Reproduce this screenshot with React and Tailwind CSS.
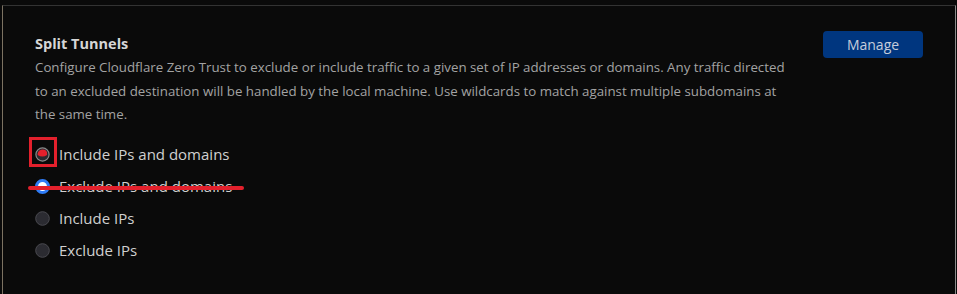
export default function App() {
  const options = [
    { label: 'Include IPs and domains', state: 'marked' },
    { label: 'Exclude IPs and domains', state: 'checked' },
    { label: 'Include IPs', state: 'off' },
    { label: 'Exclude IPs', state: 'off' },
  ];

  return (
    <div
      className="w-[957px] h-[294px] bg-[#0a0a0a] pl-[2px] pt-[5px] pr-[1px] overflow-hidden"
      style={{ fontFamily: '"Open Sans", "Noto Sans", sans-serif' }}
    >
      <div className="h-full border-l border-t border-r border-l-[#7c7262] border-t-[#333333] border-r-[#8a8a8a]">
        <div className="flex justify-between pl-[32px] pr-[32px] pt-[27px]">
          <div className="w-[752px]">
            <h2 className="text-[14.5px] font-bold text-[#d6d6d6] leading-[22px]">Split Tunnels</h2>
            <p className="text-[13.3px] leading-[23.5px] text-[#a3a3a3] mt-[1px]">
              Configure Cloudflare Zero Trust to exclude or include traffic to a given set of IP addresses or domains. Any traffic directed to an excluded destination will be handled by the local machine. Use wildcards to match against multiple subdomains at the same time.
            </p>
          </div>
          <button className="mt-[-2px] w-[100px] h-[27px] rounded-[4px] bg-[#00367f] text-[14px] text-[#c5cddb]">
            Manage
          </button>
        </div>

        <div className="flex flex-col pl-[32px] mt-[12px]">
          {options.map((o) => (
            <div key={o.label} className="relative flex items-center h-[32px]">
              <Radio state={o.state} />
              <span className="ml-[9px] text-[15px] text-[#d0d0d0]">{o.label}</span>
              {o.state === 'marked' && (
                <div className="absolute left-[-6px] top-[-2px] w-[28px] h-[30px] border-[3px] border-[#e3202c]" />
              )}
              {o.state === 'checked' && (
                <div className="absolute left-[-7px] top-[15px] w-[216px] h-[4px] rounded-full bg-[#e3202c]" />
              )}
            </div>
          ))}
        </div>
      </div>
    </div>
  );
}

function Radio({ state }) {
  if (state === 'checked') {
    return (
      <svg width="15" height="15" viewBox="0 0 15 15" className="shrink-0">
        <circle cx="7.5" cy="7.5" r="6" fill="#ffffff" stroke="#2f7cf6" strokeWidth="3" />
      </svg>
    );
  }
  if (state === 'marked') {
    return (
      <svg width="15" height="15" viewBox="0 0 15 15" className="shrink-0">
        <circle cx="7.5" cy="7.5" r="6.6" fill="#2a2a30" stroke="#8a8a8a" strokeWidth="1.2" />
        <path d="M2.6 8 A5.1 5.1 0 0 1 12 4.9 L12.1 7.9 Q7.5 11.2 2.6 8 Z" fill="#e3202c" />
      </svg>
    );
  }
  return (
    <svg width="15" height="15" viewBox="0 0 15 15" className="shrink-0">
      <circle cx="7.5" cy="7.5" r="6.8" fill="#2b2b31" stroke="#4a4a50" strokeWidth="1" />
    </svg>
  );
}
